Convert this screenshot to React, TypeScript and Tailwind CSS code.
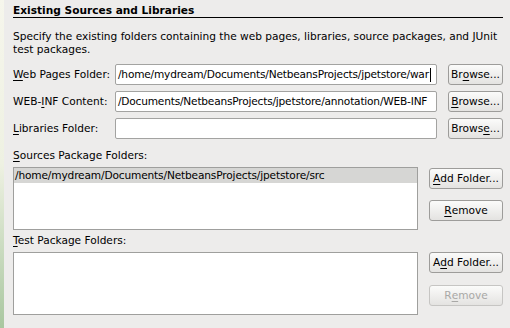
function Mn({ children }: { children: string }) {
  // mnemonic letter, GTK style underline
  return <span className="underline underline-offset-[2px]">{children}</span>;
}

function Btn({ children, disabled }: { children: React.ReactNode; disabled?: boolean }) {
  return (
    <div
      className={
        "flex h-[21px] items-center justify-center whitespace-nowrap rounded-[3px] border bg-gradient-to-b from-[#fbfbfa] to-[#e4e3e1] " +
        (disabled ? "border-[#c6c5c3] text-[#a9a8a6]" : "border-[#9d9c9a] text-black")
      }
    >
      {children}
    </div>
  );
}

function TextBox({ value, caret }: { value: string; caret?: boolean }) {
  return (
    <div className="flex h-[21px] w-[322px] items-center overflow-hidden whitespace-nowrap rounded-[2px] border border-[#a3a3a1] bg-white pl-[2px]">
      <span className="tracking-[-0.2px]">{value}</span>
      {caret && <span className="ml-[1px] inline-block h-[14px] w-[1px] shrink-0 bg-black" />}
    </div>
  );
}

function FieldRow({
  label,
  value,
  caret,
  button,
}: {
  label: React.ReactNode;
  value: string;
  caret?: boolean;
  button: React.ReactNode;
}) {
  return (
    <div className="flex items-center">
      <span className="w-[102px] whitespace-nowrap">{label}</span>
      <TextBox value={value} caret={caret} />
      <div className="ml-[11px] w-[55px]">
        <Btn>{button}</Btn>
      </div>
    </div>
  );
}

export default function App() {
  return (
    <div
      className="flex h-[328px] w-[510px] overflow-hidden text-[10.6px] leading-[13px] text-black"
      style={{ fontFamily: '"DejaVu Sans", sans-serif' }}
    >
      {/* desktop wallpaper peeking on the left */}
      <div className="w-[4px] shrink-0 bg-gradient-to-b from-[#f6f6ec] via-[#eef1e2] to-[#a9c7a0]" />

      <div className="flex w-[506px] flex-col bg-[#edeceb] pl-[9px] pr-[7px] pt-[4px]">
        <div className="border-b border-black font-bold">Existing Sources and Libraries</div>

        <p className="mt-[12px]">
          <span className="whitespace-nowrap">
            Specify the existing folders containing the web pages, libraries, source packages, and JUnit
          </span>
          <br />
          test packages.
        </p>

        <div className="mt-[8px] flex flex-col gap-[6px]">
          <FieldRow
            label={
              <>
                <Mn>W</Mn>eb Pages Folder:
              </>
            }
            value="/home/mydream/Documents/NetbeansProjects/jpetstore/war"
            caret
            button={
              <>
                Br<Mn>o</Mn>wse...
              </>
            }
          />
          <FieldRow
            label={
              <>
                WEB-<Mn>I</Mn>NF Content:
              </>
            }
            value="/Documents/NetbeansProjects/jpetstore/annotation/WEB-INF"
            button={
              <>
                <Mn>B</Mn>rowse...
              </>
            }
          />
          <FieldRow
            label={
              <>
                <Mn>L</Mn>ibraries Folder:
              </>
            }
            value=""
            button={
              <>
                Brows<Mn>e</Mn>...
              </>
            }
          />
        </div>

        <div className="mt-[10px]">
          <Mn>S</Mn>ources Package Folders:
        </div>
        <div className="mt-[5px] flex gap-[11px]">
          <div className="h-[63px] w-[405px] border border-[#9f9f9d] bg-white">
            <div className="h-[15px] whitespace-nowrap bg-[#d6d6d4] pl-[1px] leading-[15px] tracking-[-0.15px]">
              /home/mydream/Documents/NetbeansProjects/jpetstore/src
            </div>
          </div>
          <div className="flex w-[74px] flex-col gap-[11px] pt-[1px]">
            <Btn>
              <Mn>A</Mn>dd Folder...
            </Btn>
            <Btn>
              <Mn>R</Mn>emove
            </Btn>
          </div>
        </div>

        <div className="mt-[4px]">
          <Mn>T</Mn>est Package Folders:
        </div>
        <div className="mt-[5px] flex gap-[11px]">
          <div className="h-[63px] w-[405px] border border-[#9f9f9d] bg-white" />
          <div className="flex w-[74px] flex-col gap-[12px]">
            <Btn>
              A<Mn>d</Mn>d Folder...
            </Btn>
            <Btn disabled>
              R<Mn>e</Mn>move
            </Btn>
          </div>
        </div>
      </div>
    </div>
  );
}
